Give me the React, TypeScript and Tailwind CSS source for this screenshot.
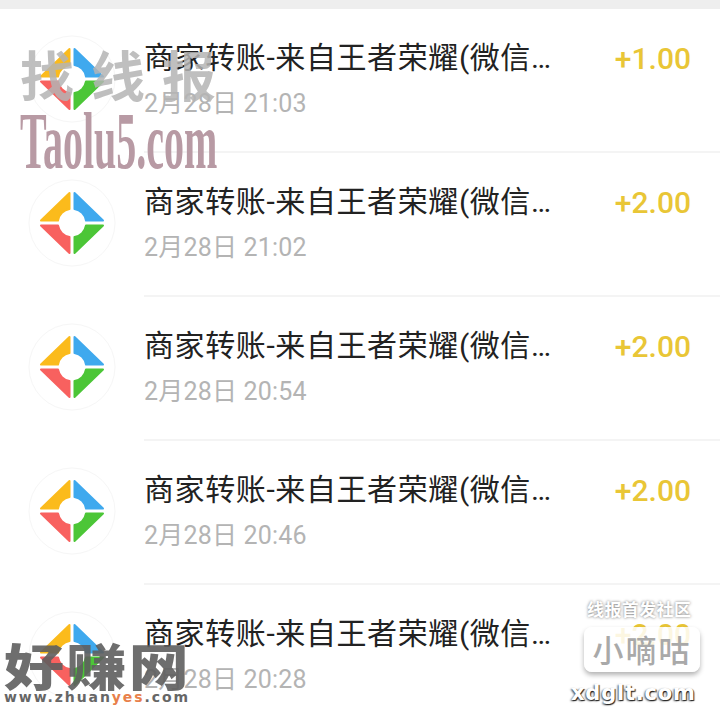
const rows = [
  { time: '2月28日 21:03', amount: '+1.00' },
  { time: '2月28日 21:02', amount: '+2.00' },
  { time: '2月28日 20:54', amount: '+2.00' },
  { time: '2月28日 20:46', amount: '+2.00' },
  { time: '2月28日 20:28', amount: '+2.00' },
];

function Logo() {
  return (
    <svg width="88" height="88" viewBox="-44 -44 88 88" className="shrink-0">
      <circle r="43" fill="#fff" stroke="#f6f6f6" strokeWidth="1" />
      <g strokeWidth="2" strokeLinejoin="round">
        <path d="M-2.5 -30 L-31 -2.5 L-14 -2.5 A14 14 0 0 1 -2.5 -14 Z" fill="#fbbb1c" stroke="#fbbb1c" />
        <path d="M2.5 -30 L31 -2.5 L14 -2.5 A14 14 0 0 0 2.5 -14 Z" fill="#3fa9ee" stroke="#3fa9ee" />
        <path d="M-2.5 30 L-31 2.5 L-14 2.5 A14 14 0 0 0 -2.5 14 Z" fill="#f8615f" stroke="#f8615f" />
        <path d="M2.5 30 L31 2.5 L14 2.5 A14 14 0 0 1 2.5 14 Z" fill="#4cc637" stroke="#4cc637" />
      </g>
    </svg>
  );
}

export default function App() {
  return (
    <div className="relative w-[720px] h-[720px] overflow-hidden bg-white font-['Roboto','Noto_Sans_CJK_SC',sans-serif]">
      <div className="h-[9px] bg-[#eeeeee]" />
      {rows.map((row, i) => (
        <div key={i} className="flex h-[144px] pl-[28px]">
          <div className="pt-[26px]">
            <Logo />
          </div>
          <div className="ml-[28px] flex-1 flex border-b-2 border-[#f4f4f4] pr-[29px]">
            <div className="flex-1 min-w-0 pt-[27px]">
              <div className="w-[410px] truncate text-[30px] leading-[44px] tracking-[0.6px] text-[#222222]">
                商家转账-来自王者荣耀(微信支付商户)
              </div>
              <div className="mt-[3px] text-[25px] leading-[42px] tracking-[0.2px] text-[#b4b4b4]">{row.time}</div>
            </div>
            <div className="pt-[28px] text-[30px] leading-[44px] font-medium text-[#e9c636]">
              {row.amount}
            </div>
          </div>
        </div>
      ))}

      {/* watermarks */}
      <div className="absolute left-[20px] top-[44px] whitespace-nowrap text-[54px] leading-[60px] font-bold tracking-[17px] text-[#b4b4b4]/85 font-['Noto_Sans_CJK_SC',sans-serif]">
        找线报
      </div>
      <div className="absolute left-[20px] top-[101px] origin-top-left scale-x-[0.5] whitespace-nowrap text-[80px] leading-[80px] font-bold text-[#b89aa4] font-['Liberation_Serif',serif]">
        Taolu5.com
      </div>

      <div className="absolute left-[4px] top-[634px] origin-top-left scale-x-[1.2] whitespace-nowrap text-[50px] leading-[60px] font-black tracking-[2px] text-[#5e5e5e]/90 font-['Noto_Sans_CJK_SC',sans-serif]">
        好赚网
      </div>
      <div className="absolute left-[4px] top-[688px] whitespace-nowrap text-[14px] leading-[18px] font-bold tracking-[1.9px] text-[#666666] font-['DejaVu_Sans',sans-serif]">
        www.zhuan<span className="text-[#e8804a]">yes</span>.com
      </div>

      <div className="absolute left-[587px] top-[599px] whitespace-nowrap text-[17px] leading-[20px] font-bold tracking-[0.4px] text-white [text-shadow:0_0_3px_#707070] font-['Noto_Sans_CJK_SC',sans-serif]">
        线报首发社区
      </div>
      <div className="absolute left-[584px] top-[627px] w-[116px] h-[45px] rounded-[8px] bg-white/85 shadow-[0_3px_5px_rgba(0,0,0,0.3)] flex items-center justify-center whitespace-nowrap text-[31px] font-medium tracking-[2px] text-[#a9a9a9] font-['Noto_Sans_CJK_SC',sans-serif]">
        小嘀咕
      </div>
      <div className="absolute left-[571px] top-[679px] whitespace-nowrap text-[21px] leading-[28px] font-bold tracking-[0.8px] text-white [text-shadow:1px_1px_1px_#222222,-1px_1px_2px_#555555] font-['DejaVu_Sans',sans-serif]">
        xdglt.com
      </div>
    </div>
  );
}
